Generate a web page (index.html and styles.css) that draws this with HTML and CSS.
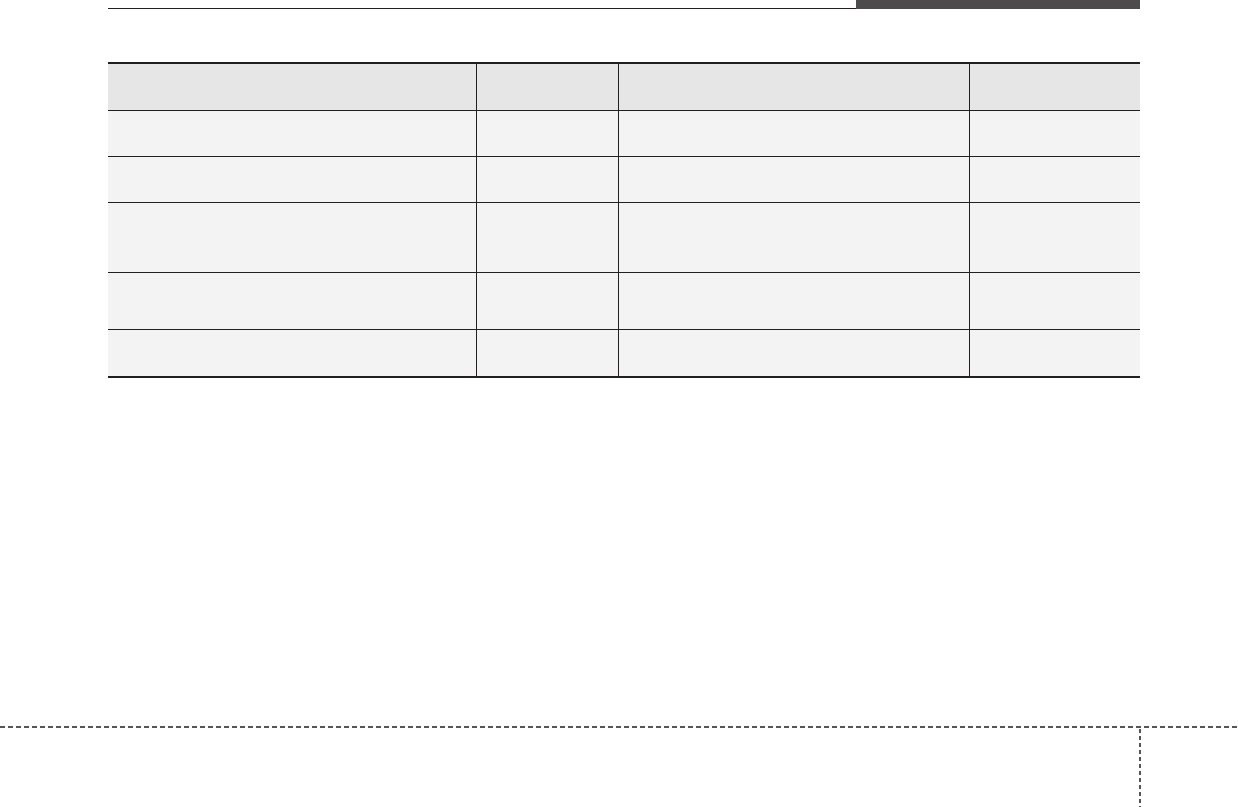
FILE: index.html
```html
<!DOCTYPE html>
<html lang="en">
<head>
<meta charset="utf-8">
<title>Table page</title>
<link rel="stylesheet" href="styles.css">
</head>
<body>
<div class="page">
  <header class="top">
    <div class="top-line"></div>
    <div class="top-tab"></div>
  </header>
  <div class="table">
    <div class="row head">
      <div class="cell"></div><div class="cell"></div><div class="cell"></div><div class="cell"></div>
    </div>
    <div class="row r1">
      <div class="cell"></div><div class="cell"></div><div class="cell"></div><div class="cell"></div>
    </div>
    <div class="row r2">
      <div class="cell"></div><div class="cell"></div><div class="cell"></div><div class="cell"></div>
    </div>
    <div class="row r3">
      <div class="cell"></div><div class="cell"></div><div class="cell"></div><div class="cell"></div>
    </div>
    <div class="row r4">
      <div class="cell"></div><div class="cell"></div><div class="cell"></div><div class="cell"></div>
    </div>
    <div class="row r5 last">
      <div class="cell"></div><div class="cell"></div><div class="cell"></div><div class="cell"></div>
    </div>
  </div>
</div>
<footer class="foot">
  <div class="dash-h"></div>
  <div class="foot-body">
    <div class="dash-v"></div>
  </div>
</footer>
</body>
</html>
```

FILE: styles.css
```css
* { box-sizing: border-box; }
html, body { margin: 0; padding: 0; background: #fff; font-family: "Liberation Sans", Arial, sans-serif; }
body { width: 1238px; height: 807px; overflow: hidden; }

.page { padding: 0 98px 0 108px; }

.top { display: flex; height: 9px; }
.top-line { flex: 1; height: 9px; border-bottom: 1px solid #231f20; }
.top-tab { width: 284px; height: 9px; background: #4e4b4c; }

.table { margin-top: 53px; border-top: 2px solid #231f20; }
.row {
  display: grid;
  grid-template-columns: 368px 142px 351px 171px;
  border-bottom: 1px solid #231f20;
  background: #f3f3f3;
}
.row .cell + .cell { border-left: 1px solid #231f20; }
.row.head { background: #e6e6e6; height: 47px; }
.row.r1 { height: 46px; }
.row.r2 { height: 46px; }
.row.r3 { height: 70px; }
.row.r4 { height: 57px; }
.row.r5 { height: 48px; }
.row.last { border-bottom: 2px solid #231f20; }

.foot { margin-top: 348px; }
.dash-h {
  height: 2px;
  background: repeating-linear-gradient(to right, #555 0 5px, transparent 5px 8px);
}
.foot-body { display: flex; justify-content: flex-end; padding-right: 97px; height: 79px; }
.dash-v {
  width: 2px;
  height: 100%;
  background: repeating-linear-gradient(to bottom, transparent 0 1px, #555 1px 5px, transparent 5px 7px);
}
```
